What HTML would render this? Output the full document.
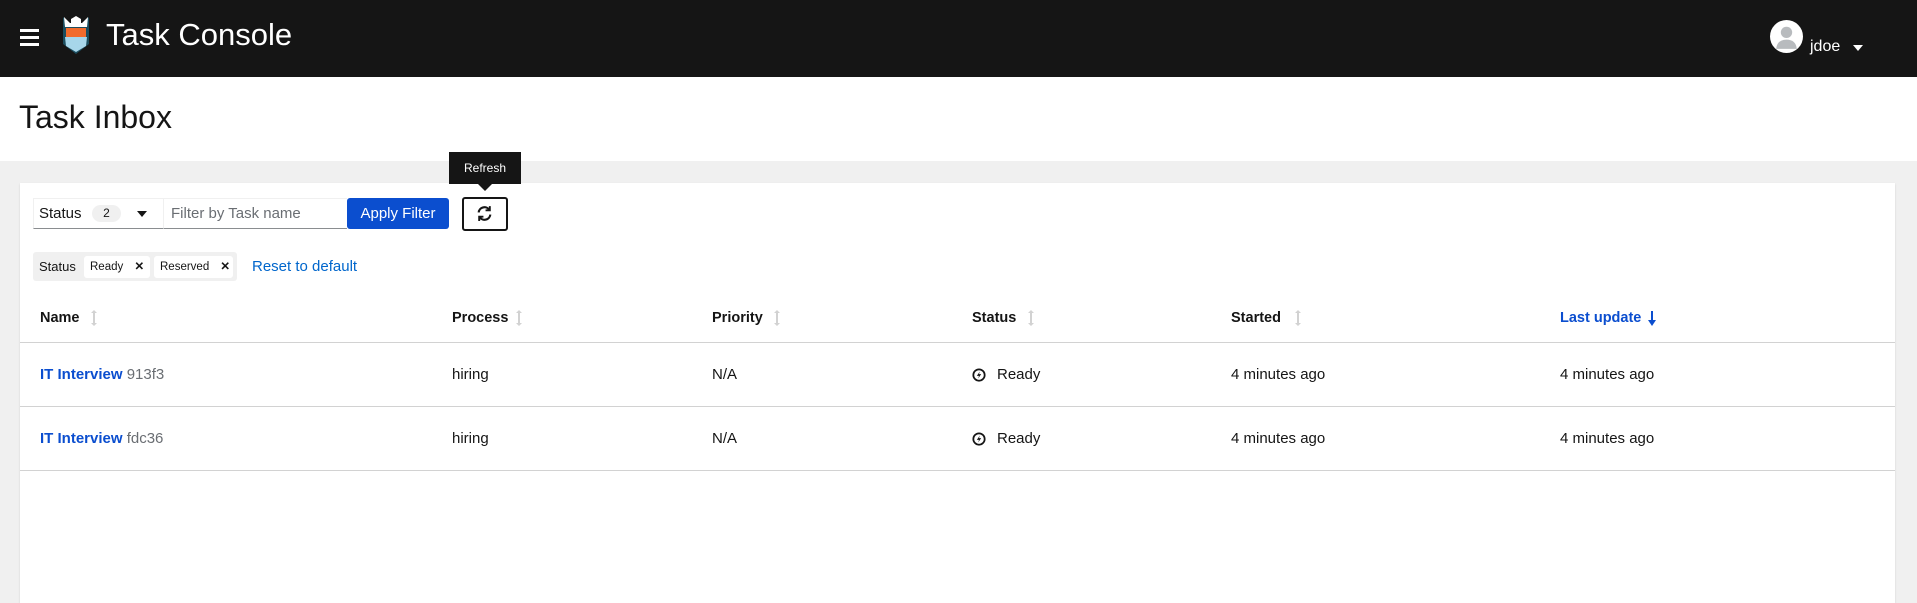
<!DOCTYPE html>
<html><head><meta charset="utf-8"><style>
*{box-sizing:border-box;margin:0;padding:0}
body{width:1917px;height:582px;overflow:hidden;background:#f0f0f0;font-family:"Liberation Sans",sans-serif;color:#151515;position:relative}
.abs{position:absolute}
.hdr{left:0;top:0;width:1917px;height:77px;background:#151515}
.title{left:0;top:77px;width:1917px;height:84px;background:#fff}
.card{left:20px;top:183px;width:1875px;height:420px;background:#fff;box-shadow:0 1px 2px rgba(0,0,0,.12)}
.t{font-size:16px;white-space:nowrap}
.th{font-size:14.5px;font-weight:bold;color:#151515}
.line{height:1px;background:#d2d2d2;left:20px;width:1875px}
a{color:#0066cc;text-decoration:none}
</style></head><body>
<div class="abs hdr"></div>
<div class="abs" style="left:20px;top:29px;width:19px;height:3px;background:#fff"></div>
<div class="abs" style="left:20px;top:36px;width:19px;height:3px;background:#fff"></div>
<div class="abs" style="left:20px;top:43px;width:19px;height:3px;background:#fff"></div>
<svg class="abs" style="left:62px;top:16px" width="28" height="38" viewBox="0 0 28 38">
<path d="M1 1 L7 8 L21 8 L27 1 L27 28 L14 38 L1 28Z" fill="#1c4d5e"/>
<path d="M2 1 L8 7 L20 7 L26 1 L25 11 L3 11Z" fill="#fff"/>
<path d="M9 3 L14 0 L19 3 L19 8 L9 8Z" fill="#fff"/>
<rect x="4" y="12" width="20" height="10" fill="#f26b2c"/>
<path d="M3 21 L25 21 L24 30 L14 36 L4 30Z" fill="#a7d6ea"/>
</svg>
<div class="abs" style="left:106px;top:17px;font-size:31px;color:#fff">Task Console</div>
<svg class="abs" style="left:1770px;top:20px" width="33" height="33" viewBox="0 0 32 32"><circle cx="16" cy="16" r="16" fill="#fff"/><circle cx="16" cy="12" r="5.5" fill="#b8bbbe"/><path d="M6 28 Q7 19 16 19 Q25 19 26 28 Z" fill="#b8bbbe"/></svg>
<div class="abs t" style="left:1810px;top:38px;color:#fff;font-size:16px">jdoe</div>
<div class="abs" style="left:1853px;top:45px;border:5px solid transparent;border-top:6px solid #fff;border-bottom:0"></div>

<div class="abs title"></div>
<div class="abs" style="left:19px;top:99px;font-size:32px">Task Inbox</div>

<div class="abs card"></div>
<div class="abs" style="left:33px;top:198px;width:130px;height:31px;border-bottom:1px solid #8a8d90;border-top:1px solid #f0f0f0;border-left:1px solid #f0f0f0"></div>
<div class="abs t" style="left:39px;top:205px;font-size:15px">Status</div>
<div class="abs" style="left:92px;top:205px;width:29px;height:17px;border-radius:9px;background:#f0f0f0;font-size:12px;text-align:center;line-height:17px">2</div>
<div class="abs" style="left:137px;top:211px;border:5px solid transparent;border-top:6px solid #151515;border-bottom:0"></div>
<div class="abs" style="left:163px;top:198px;width:184px;height:31px;border-bottom:1px solid #8a8d90;border-top:1px solid #f0f0f0;border-left:1px solid #f0f0f0"></div>
<div class="abs t" style="left:171px;top:205px;font-size:15px;color:#6a6e73">Filter by Task name</div>
<div class="abs" style="left:347px;top:198px;width:102px;height:31px;background:#0b4ecf;border-radius:3px;color:#fff;font-size:15px;text-align:center;line-height:31px">Apply Filter</div>
<div class="abs" style="left:462px;top:197px;width:46px;height:34px;border:2px solid #151515;border-radius:3px"></div>
<svg class="abs" style="left:476px;top:205px" width="17" height="17" viewBox="0 0 16 16" fill="none" stroke="#151515" stroke-width="2"><path d="M2.5 7 A5.5 5.5 0 0 1 12.5 4.5"/><path d="M13.5 9 A5.5 5.5 0 0 1 3.5 11.5"/><path d="M13 1 V5 H9" stroke-width="1.8"/><path d="M3 15 V11 H7" stroke-width="1.8"/></svg>
<div class="abs" style="left:449px;top:152px;width:72px;height:32px;background:#151515;color:#fff;font-size:12px;text-align:center;line-height:32px">Refresh</div>
<div class="abs" style="left:478px;top:184px;border:7px solid transparent;border-top:7px solid #151515;border-bottom:0"></div>
<div class="abs" style="top:252px;height:29px;background:#f0f0f0;border-radius:3px;left:33px;width:204px"></div>
<div class="abs t" style="left:39px;top:259px;font-size:13px;color:#151515">Status</div>
<div class="abs" style="left:84px;top:256px;width:66px;height:22px;background:#fff;border-radius:3px;font-size:11.5px;line-height:22px;padding-left:6px">Ready <span style="margin-left:8px;font-weight:bold">✕</span></div>
<div class="abs" style="left:154px;top:256px;width:79px;height:22px;background:#fff;border-radius:3px;font-size:11.5px;line-height:22px;padding-left:6px">Reserved <span style="margin-left:8px;font-weight:bold">✕</span></div>
<div class="abs t" style="left:252px;top:258px;font-size:15px"><a>Reset to default</a></div>
<div class="abs th" style="left:40px;top:310px">Name</div>
<div class="abs th" style="left:452px;top:310px">Process</div>
<div class="abs th" style="left:712px;top:310px">Priority</div>
<div class="abs th" style="left:972px;top:310px">Status</div>
<div class="abs th" style="left:1231px;top:310px">Started</div>
<div class="abs th" style="left:1560px;top:310px;color:#0b4ecf">Last update</div>
<svg class="abs" style="left:91px;top:310px" width="6" height="16" viewBox="0 0 6 16" fill="#d2d2d2"><path d="M3 0 L6 3 H4 V13 H6 L3 16 L0 13 H2 V3 H0Z"/></svg>
<svg class="abs" style="left:516px;top:310px" width="6" height="16" viewBox="0 0 6 16" fill="#d2d2d2"><path d="M3 0 L6 3 H4 V13 H6 L3 16 L0 13 H2 V3 H0Z"/></svg>
<svg class="abs" style="left:774px;top:310px" width="6" height="16" viewBox="0 0 6 16" fill="#d2d2d2"><path d="M3 0 L6 3 H4 V13 H6 L3 16 L0 13 H2 V3 H0Z"/></svg>
<svg class="abs" style="left:1028px;top:310px" width="6" height="16" viewBox="0 0 6 16" fill="#d2d2d2"><path d="M3 0 L6 3 H4 V13 H6 L3 16 L0 13 H2 V3 H0Z"/></svg>
<svg class="abs" style="left:1295px;top:310px" width="6" height="16" viewBox="0 0 6 16" fill="#d2d2d2"><path d="M3 0 L6 3 H4 V13 H6 L3 16 L0 13 H2 V3 H0Z"/></svg>
<div class="abs" style="left:1651px;top:311px;width:2px;height:10px;background:#0b4ecf"></div>
<div class="abs" style="left:1648px;top:320px;border:4px solid transparent;border-top:6px solid #0b4ecf;border-bottom:0"></div>
<div class="abs line" style="top:342px"></div>
<div class="abs line" style="top:406px"></div>
<div class="abs line" style="top:470px"></div>
<div class="abs t" style="left:40px;top:366px;font-size:15px"><a style="font-weight:bold;color:#0b4ecf">IT Interview</a> <span style="color:#6a6e73">913f3</span></div>
<div class="abs t" style="left:40px;top:430px;font-size:15px"><a style="font-weight:bold;color:#0b4ecf">IT Interview</a> <span style="color:#6a6e73">fdc36</span></div>
<div class="abs t" style="left:452px;top:366px;font-size:15px">hiring</div>
<div class="abs t" style="left:452px;top:430px;font-size:15px">hiring</div>
<div class="abs t" style="left:712px;top:366px;font-size:15px">N/A</div>
<div class="abs t" style="left:712px;top:430px;font-size:15px">N/A</div>
<svg class="abs" style="left:972px;top:368px" width="14" height="14" viewBox="0 0 16 16"><circle cx="8" cy="8" r="6.5" fill="none" stroke="#151515" stroke-width="2"/><path d="M9 4 L5.5 9 H8 L7 12 L10.5 7 H8Z" fill="#151515"/></svg>
<svg class="abs" style="left:972px;top:432px" width="14" height="14" viewBox="0 0 16 16"><circle cx="8" cy="8" r="6.5" fill="none" stroke="#151515" stroke-width="2"/><path d="M9 4 L5.5 9 H8 L7 12 L10.5 7 H8Z" fill="#151515"/></svg>
<div class="abs t" style="left:997px;top:366px;font-size:15px">Ready</div>
<div class="abs t" style="left:997px;top:430px;font-size:15px">Ready</div>
<div class="abs t" style="left:1231px;top:366px;font-size:15px">4 minutes ago</div>
<div class="abs t" style="left:1231px;top:430px;font-size:15px">4 minutes ago</div>
<div class="abs t" style="left:1560px;top:366px;font-size:15px">4 minutes ago</div>
<div class="abs t" style="left:1560px;top:430px;font-size:15px">4 minutes ago</div>
</body></html>
